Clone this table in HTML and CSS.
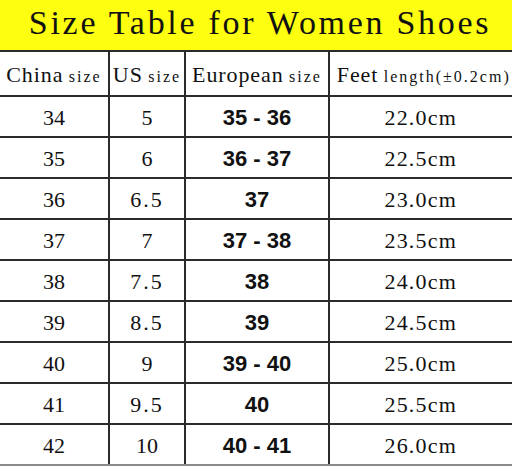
FILE: index.html
```html
<!DOCTYPE html>
<html>
<head>
<meta charset="utf-8">
<link rel="stylesheet" href="styles.css">
</head>
<body>
<div class="sheet">
  <div class="title">Size Table for Women Shoes</div>
  <table class="sizes">
    <colgroup>
      <col class="c1"><col class="c2"><col class="c3"><col class="c4">
    </colgroup>
    <tr class="head">
      <td><span class="big">China</span> <span class="small">size</span></td>
      <td><span class="big">US</span> <span class="small">size</span></td>
      <td><span class="big">European</span> <span class="small">size</span></td>
      <td class="feet"><span class="big">Feet</span> <span class="small">length(±0.2cm)</span></td>
    </tr>
    <tr><td>34</td><td>5</td><td class="eu">35 - 36</td><td class="cm">22.0cm</td></tr>
    <tr><td>35</td><td>6</td><td class="eu">36 - 37</td><td class="cm">22.5cm</td></tr>
    <tr><td>36</td><td class="half">6.5</td><td class="eu">37</td><td class="cm">23.0cm</td></tr>
    <tr><td>37</td><td>7</td><td class="eu">37 - 38</td><td class="cm">23.5cm</td></tr>
    <tr><td>38</td><td class="half">7.5</td><td class="eu">38</td><td class="cm">24.0cm</td></tr>
    <tr><td>39</td><td class="half">8.5</td><td class="eu">39</td><td class="cm">24.5cm</td></tr>
    <tr><td>40</td><td>9</td><td class="eu">39 - 40</td><td class="cm">25.0cm</td></tr>
    <tr><td>41</td><td class="half">9.5</td><td class="eu">40</td><td class="cm">25.5cm</td></tr>
    <tr><td>42</td><td>10</td><td class="eu">40 - 41</td><td class="cm">26.0cm</td></tr>
  </table>
</div>
</body>
</html>
```
FILE: styles.css
```css
html, body {
  margin: 0;
  padding: 0;
  background: #ffffff;
}
.sheet {
  width: 512px;
  height: 467px;
  overflow: hidden;
  font-family: "Liberation Serif", "Times New Roman", serif;
  color: #111;
}
.title {
  height: 50px;
  background: #fefe10;
  font-size: 34px;
  letter-spacing: 2.7px;
  line-height: 46px;
  text-align: center;
  padding-left: 8px;
  box-sizing: border-box;
}
.sizes {
  width: 512px;
  border-collapse: collapse;
  table-layout: fixed;
}
.c1 { width: 109px; }
.c2 { width: 76px; }
.c3 { width: 144px; }
.c4 { width: 183px; }
.sizes td {
  border-top: 2px solid #2b2b2b;
  border-left: 2px solid #2b2b2b;
  height: 37px;
  padding: 2px 0 0 0;
  text-align: center;
  vertical-align: middle;
  font-size: 22px;
  white-space: nowrap;
}
.sizes td:first-child {
  border-left: none;
}
.sizes td:last-child {
  border-right: 1px solid #cfcfcf;
}
.sizes tr:last-child td {
  border-bottom: 2px solid #8a8a8a;
}
.sizes .head td {
  height: 40px;
  padding-top: 3px;
}
.sizes .head td.feet {
  padding-left: 6px;
}
.big {
  font-size: 22px;
  letter-spacing: 0.9px;
}
.small {
  font-size: 16px;
  letter-spacing: 2px;
}
.eu {
  font-family: "Liberation Sans", Arial, sans-serif;
  font-weight: bold;
  font-size: 18px;
}
.cm {
  letter-spacing: 1.2px;
  padding-left: 12px;
}
.half {
  letter-spacing: 2px;
}
```
